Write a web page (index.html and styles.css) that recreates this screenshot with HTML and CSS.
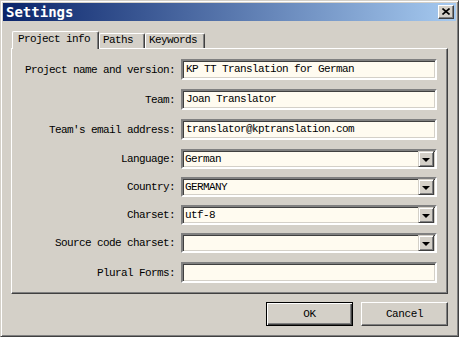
FILE: index.html
```html
<!DOCTYPE html>
<html>
<head>
<meta charset="utf-8">
<link rel="stylesheet" href="styles.css">
</head>
<body>
<div class="window">
  <div class="titlebar">
    <span class="title">Settings</span>
    <span class="close"><svg width="8" height="7" viewBox="0 0 8 7"><path d="M0.5 0.5 L7.5 6.5 M7.5 0.5 L0.5 6.5" stroke="#000" stroke-width="1.6" fill="none"/></svg></span>
  </div>
  <div class="tabs">
    <div class="tab selected">Project info</div>
    <div class="tab t-paths">Paths</div>
    <div class="tab t-keys">Keywords</div>
  </div>
  <div class="pane">
    <div class="row text"><div class="label">Project name and version:</div><div class="field">KP TT Translation for German</div></div>
    <div class="row text"><div class="label">Team:</div><div class="field">Joan Translator</div></div>
    <div class="row text"><div class="label">Team's email address:</div><div class="field">translator@kptranslation.com</div></div>
    <div class="row combo"><div class="label">Language:</div><div class="field"><span class="val">German</span><span class="drop"><i></i></span></div></div>
    <div class="row combo"><div class="label">Country:</div><div class="field"><span class="val">GERMANY</span><span class="drop"><i></i></span></div></div>
    <div class="row combo"><div class="label">Charset:</div><div class="field"><span class="val">utf-8</span><span class="drop"><i></i></span></div></div>
    <div class="row combo src"><div class="label">Source code charset:</div><div class="field"><span class="val"></span><span class="drop"><i></i></span></div></div>
    <div class="row text"><div class="label">Plural Forms:</div><div class="field"></div></div>
  </div>
  <div class="buttons">
    <div class="btn default"><span>OK</span></div>
    <div class="btn"><span>Cancel</span></div>
  </div>
</div>
</body>
</html>
```

FILE: styles.css
```css
* { box-sizing: border-box; }
html, body { margin: 0; padding: 0; background: #d4d0c8; }
body {
  font-family: "Liberation Mono", "DejaVu Sans Mono", monospace;
  font-size: 11px;
  letter-spacing: -0.6px;
  color: #000;
}
.window {
  width: 459px;
  height: 337px;
  background: #d4d0c8;
  border: 1px solid;
  border-color: #d4d0c8 #404040 #404040 #d4d0c8;
  box-shadow: inset 1px 1px #fff, inset -1px -1px #808080;
  padding: 2px;
  display: flex;
  flex-direction: column;
}
.titlebar {
  height: 18px;
  background: linear-gradient(to right, #0a246a, #a6caf0);
  display: flex;
  align-items: center;
  justify-content: space-between;
  padding: 0 2px 0 3px;
}
.title {
  font-family: "DejaVu Sans Mono", monospace;
  font-weight: bold;
  font-size: 14px;
  letter-spacing: 0;
  color: #fff;
  line-height: 18px;
}
.close {
  width: 16px;
  height: 14px;
  background: #d4d0c8;
  border: 1px solid;
  border-color: #fff #404040 #404040 #fff;
  box-shadow: inset -1px -1px #808080;
  display: flex;
  align-items: center;
  justify-content: center;
  padding-bottom: 1px;
}
.close svg { display: block; }
.tabs {
  display: flex;
  align-items: flex-end;
  height: 17px;
  margin: 10px 8px 0 9px;
}
.tab {
  height: 15px;
  border-top: 1px solid #fff;
  border-left: 1px solid #fff;
  border-right: 1px solid #404040;
  box-shadow: inset -1px 0 #808080;
  border-top-left-radius: 2px;
  border-top-right-radius: 2px;
  line-height: 13px;
  padding-left: 3px;
  background: #d4d0c8;
}
.tab.selected {
  height: 18px;
  width: 87px;
  margin-bottom: -1px;
  position: relative;
  z-index: 1;
  line-height: 15px;
  padding-left: 5px;
}
.t-paths { width: 46px; }
.t-keys { width: 60px; }
.pane {
  height: 246px;
  margin: 0 8px;
  border: 1px solid;
  border-color: #fff #404040 #404040 #fff;
  box-shadow: inset -1px -1px #808080;
  padding-top: 10px;
  display: flex;
  flex-direction: column;
}
.row {
  display: flex;
  align-items: center;
  margin-bottom: 9px;
}
.row.combo { margin-bottom: 8px; }
.row.combo.src { margin-bottom: 9px; }
.label {
  width: 163px;
  text-align: right;
  margin-right: 6px;
  white-space: nowrap;
}
.field {
  width: 256px;
  height: 21px;
  background: #fffbf0;
  border: 2px solid;
  border-color: #808080 #fff #fff #808080;
  box-shadow: inset 1px 1px #404040, inset -1px -1px #d4d0c8;
  padding-left: 3px;
  line-height: 17px;
  white-space: nowrap;
  display: flex;
  align-items: center;
}
.row.combo .field {
  height: 20px;
  justify-content: space-between;
  padding-right: 1px;
  padding-left: 2px;
}
.val { line-height: 16px; }
.drop {
  width: 16px;
  height: 16px;
  background: #d4d0c8;
  border: 1px solid;
  border-color: #d4d0c8 #404040 #404040 #d4d0c8;
  box-shadow: inset 1px 1px #fff, inset -1px -1px #808080;
  display: flex;
  align-items: center;
  justify-content: center;
}
.drop i {
  width: 0;
  height: 0;
  border-left: 4px solid transparent;
  border-right: 4px solid transparent;
  border-top: 4px solid #000;
  margin-top: 1px;
}
.buttons {
  display: flex;
  justify-content: flex-end;
  gap: 8px;
  margin: 8px 8px 0 0;
}
.btn {
  width: 87px;
  height: 24px;
  border: 1px solid;
  border-color: #fff #404040 #404040 #fff;
  box-shadow: inset -1px -1px #808080;
  display: flex;
  align-items: center;
  justify-content: center;
  letter-spacing: -0.4px;
}
.btn.default {
  border: 1px solid #000;
  box-shadow: inset 1px 1px #fff, inset -1px -1px #404040, inset -2px -2px #808080;
}
```
